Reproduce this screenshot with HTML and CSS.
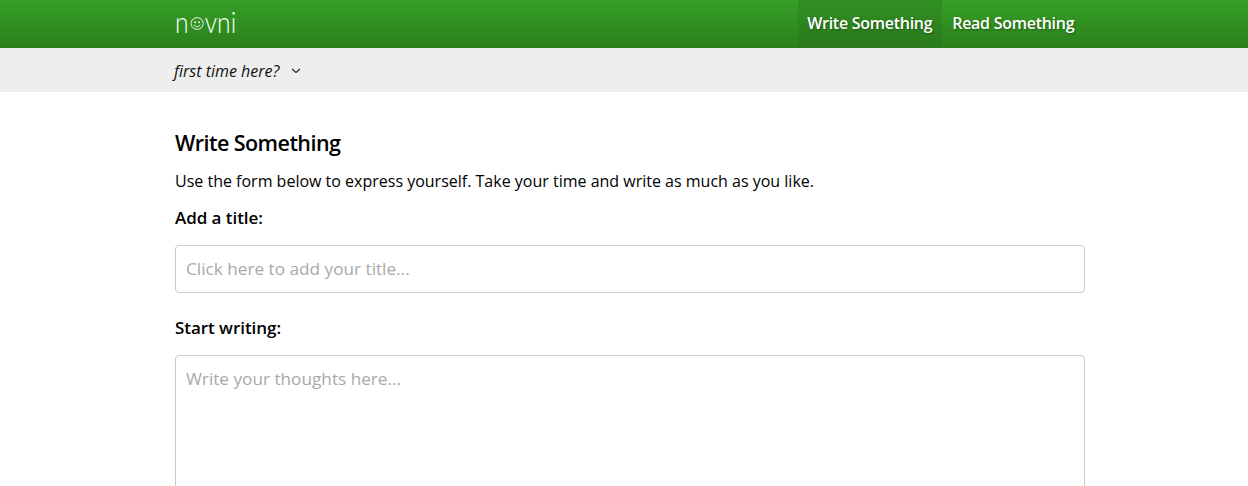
FILE: index.html
```html
<!DOCTYPE html>
<html lang="en">
<head>
<meta charset="utf-8">
<title>novni</title>
<link rel="stylesheet" href="styles.css">
</head>
<body>
<header class="topbar">
  <div class="wrap topbar-inner">
    <a class="logo" href="#">n<svg class="logo-face" viewBox="0 0 14 14" width="16" height="13" preserveAspectRatio="none" aria-hidden="true"><circle cx="7" cy="7" r="6.300" fill="none" stroke="#fff" stroke-width="1"/><circle cx="5" cy="5.600" r="1" fill="#fff"/><circle cx="9" cy="5.600" r="1" fill="#fff"/><path d="M3.800 8.200c.7 1.500 1.800 2.200 3.200 2.200s2.500-.7 3.200-2.200" fill="none" stroke="#fff" stroke-width="1"/></svg>vni</a>
    <nav class="nav">
      <a class="nav-item active" href="#">Write Something</a>
      <a class="nav-item" href="#">Read Something</a>
    </nav>
  </div>
</header>
<div class="subbar">
  <div class="wrap subbar-inner">
    <span class="first-time">first time here?</span>
    <svg class="chevron" viewBox="0 0 10 6" width="10" height="6" aria-hidden="true"><path d="M1 1l4 3.500L9 1" fill="none" stroke="#222" stroke-width="1.100"/></svg>
  </div>
</div>
<main class="wrap content">
  <h1 class="title">Write Something</h1>
  <p class="intro">Use the form below to express yourself. Take your time and write as much as you like.</p>
  <form class="form">
    <label class="label" for="t">Add a title:</label>
    <input class="field field-input" id="t" type="text" placeholder="Click here to add your title...">
    <label class="label label-second" for="b">Start writing:</label>
    <textarea class="field field-area" id="b" placeholder="Write your thoughts here..."></textarea>
  </form>
</main>
</body>
</html>
```
FILE: styles.css
```css
* { box-sizing: border-box; }
html, body { margin: 0; height: 486px; overflow: hidden; background: #fff; }
body { font-family: "Open Sans", sans-serif; color: #000; }
.wrap { width: 910px; margin-left: 175px; }
.topbar { height: 48px; background: linear-gradient(#36a026, #2b7f1b); }
.topbar-inner { display: flex; justify-content: space-between; height: 48px; }
.logo { display: flex; align-items: center; height: 48px; padding-bottom: 6px; font-family: "Lato", sans-serif; font-weight: 300; font-size: 29px; color: #fff; text-decoration: none; transform: scaleX(.85); transform-origin: left center; }
.logo-face { margin: 5px 1px 0 2px; }
.nav { display: flex; }
.nav-item { display: flex; align-items: center; justify-content: center; width: 143.500px; height: 48px; padding-bottom: 2px; font-size: 16px; font-weight: 600; letter-spacing: -0.27px; color: #fff; text-decoration: none; text-shadow: 1px 1px 2px rgba(0,0,0,.35); }
.nav-item.active { background: linear-gradient(#318f23, #2a7a1a); }
.subbar { height: 44px; background: #eee; }
.subbar-inner { display: flex; align-items: center; gap: 12px; height: 44px; }
.first-time { padding-top: 2px; font-size: 16px; font-style: italic; color: #111; margin-left: -1px; }
.chevron { margin-top: 1px; }
.content { padding-top: 36px; }
.title { margin: 0; font-family: "Open Sans", sans-serif; font-size: 21.500px; line-height: 30px; font-weight: 600; letter-spacing: -0.55px; }
.intro { margin: 11px 0 0; font-size: 16px; line-height: 24px; }
.form { display: flex; flex-direction: column; }
.label { margin-top: 13px; font-size: 17px; line-height: 24px; font-weight: 600; letter-spacing: -0.05px; }
.label-second { margin-top: 23px; }
.field { display: block; width: 100%; margin-top: 15px; padding: 0 10px 2px; border: 1px solid #ccc9c2; border-radius: 4px; font-family: "Open Sans", sans-serif; font-size: 17.200px; background: #fff; outline: none; }
.field::placeholder { color: #a9a9a9; opacity: 1; }
.field-input { height: 48px; }
.field-area { height: 200px; padding-top: 11px; line-height: 24px; resize: none; }
```
